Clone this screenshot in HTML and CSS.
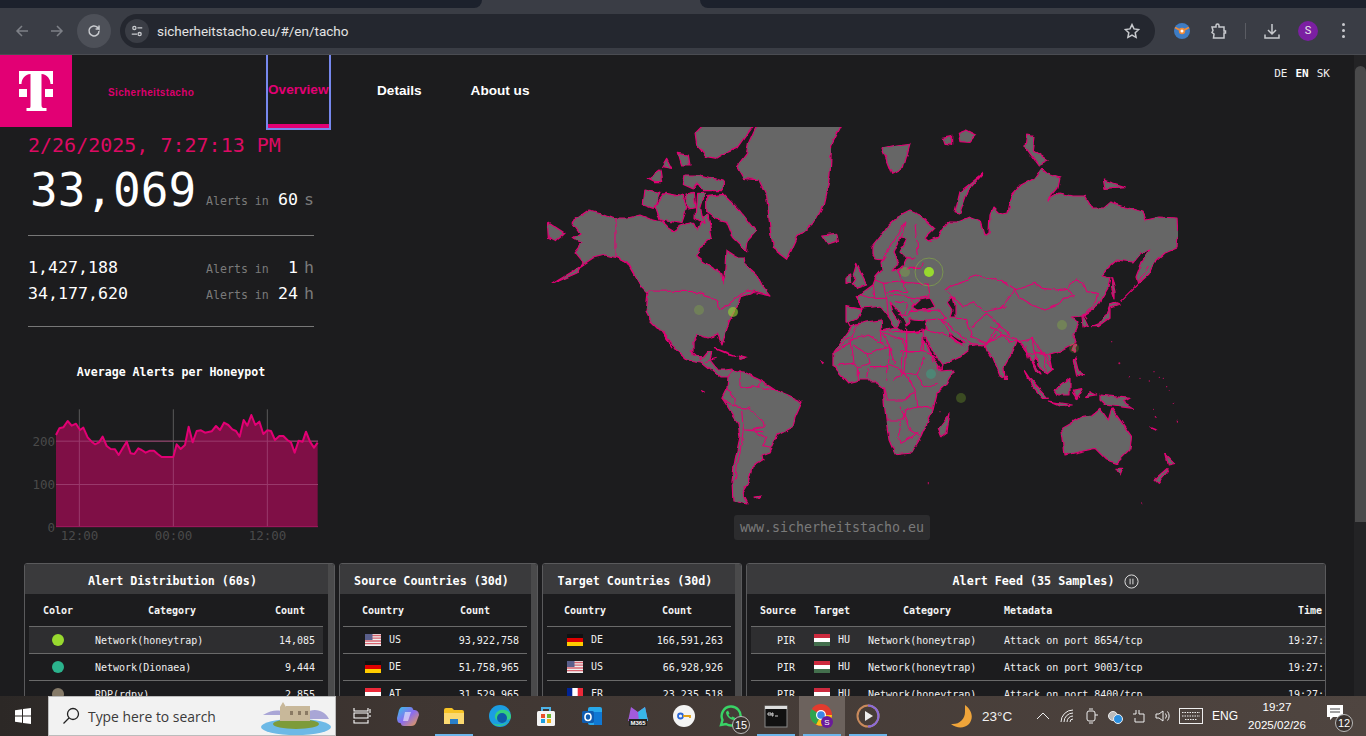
FILE: index.html
```html
<!DOCTYPE html>
<html lang="en">
<head>
<meta charset="utf-8">
<title>Sicherheitstacho</title>
<link rel="stylesheet" href="styles.css">
</head>
<body>
<svg class="defs" width="0" height="0" aria-hidden="true">
  <symbol id="f-us" viewBox="0 0 16 12"><rect width="16" height="12" fill="#eee"/><path d="M0 1.5h16M0 4.2h16M0 7h16M0 9.7h16" stroke="#d8636f" stroke-width="1.3"/><rect width="7.5" height="6" fill="#5a5f8c"/></symbol>
  <symbol id="f-de" viewBox="0 0 16 12"><rect width="16" height="4" fill="#111"/><rect y="4" width="16" height="4" fill="#d00"/><rect y="8" width="16" height="4" fill="#fc0"/></symbol>
  <symbol id="f-at" viewBox="0 0 16 12"><rect width="16" height="12" fill="#ed2939"/><rect y="4" width="16" height="4" fill="#fff"/></symbol>
  <symbol id="f-fr" viewBox="0 0 16 12"><rect width="16" height="12" fill="#fff"/><rect width="5.3" height="12" fill="#002395"/><rect x="10.7" width="5.3" height="12" fill="#ed2939"/></symbol>
  <symbol id="f-hu" viewBox="0 0 16 12"><rect width="16" height="4" fill="#cd2a3e"/><rect y="4" width="16" height="4" fill="#fff"/><rect y="8" width="16" height="4" fill="#436f4d"/></symbol>
</svg>

<div class="tabstrip"><div class="strip-dark"></div><div class="strip-gap"></div><div class="strip-dark grow"></div></div>

<div class="toolbar">
  <svg class="tb-ico" viewBox="0 0 16 16"><path d="M14 8H3M8 3 3 8l5 5" class="dim"/></svg>
  <svg class="tb-ico" viewBox="0 0 16 16"><path d="M2 8h11M8 3l5 5-5 5" class="dim"/></svg>
  <div class="reload"><svg viewBox="0 0 16 16"><path d="M13 8a5 5 0 1 1-1.5-3.6L13 6V2.5M13 6H9.6" class="lit"/></svg></div>
  <div class="omnibox">
    <div class="tune"><svg viewBox="0 0 16 16"><circle cx="5" cy="4.5" r="1.8" class="lit"/><path d="M8.5 4.5H14M2 11.5h6" class="lit"/><circle cx="11" cy="11.5" r="1.8" class="lit"/></svg></div>
    <span class="url">sicherheitstacho.eu/#/en/tacho</span>
    <svg class="star" viewBox="0 0 16 16"><path d="M8 1.6l2 4.3 4.7.6-3.5 3.2.9 4.7L8 12.1l-4.1 2.3.9-4.7L1.300 6.500 6 5.900z" class="lit"/></svg>
  </div>
  <div class="tb-right">
    <svg class="ext-ico" viewBox="0 0 16 16"><circle cx="8" cy="8" r="8" fill="#3d7cc4"/><path d="M1 4.500 6 7h4l5-2.500" stroke="#f08a38" stroke-width="1.800" fill="none"/><circle cx="8" cy="8" r="3.200" fill="#f08a38"/><circle cx="8" cy="8" r="1.500" fill="#fff"/></svg>
    <svg class="tb-ico2" viewBox="0 0 18 18"><path d="M2 5h4V3.500a1.500 1.500 0 0 1 3 0V5h5v4h1.500v2H14v5H3.500l.5-4-2-1.500 1-2z" class="lit"/></svg>
    <div class="tb-sep"></div>
    <svg class="tb-ico2" viewBox="0 0 18 18"><path d="M9 2v9.500M5 8l4 4 4-4M2 12.500V16h14v-3.500" class="lit"/></svg>
    <div class="avatar">S</div>
    <div class="kebab"><i></i><i></i><i></i></div>
  </div>
</div>

<div class="viewport">
<div class="content">
  <header class="site-head">
    <div class="logo"><svg viewBox="0 0 34 40"><path d="M0 0h34v13h-2.500c0-5-3.500-9.800-9-10V34c0 2.500 1 3 3 3h2v3H7.500v-3h2c2 0 2-.5 2-3V3c-5.500.2-9 5-9 10H0z" fill="#fff"/><rect y="18" width="8" height="8" fill="#fff"/><rect x="26" y="18" width="8" height="8" fill="#fff"/></svg></div>
    <div class="brand">Sicherheitstacho</div>
    <nav class="nav">
      <a class="nav-item active">Overview</a>
      <a class="nav-item">Details</a>
      <a class="nav-item">About us</a>
    </nav>
    <div class="langs"><span>DE</span><b>EN</b><span>SK</span></div>
  </header>

  <section class="dash">
    <div class="stats">
      <div class="date">2/26/2025, 7:27:13 PM</div>
      <div class="stat big"><span class="num">33,069</span><span class="lbl">Alerts in</span><span class="val">60</span><span class="unit">s</span></div>
      <hr class="rule first">
      <div class="stat-group">
        <div class="stat"><span class="num">1,427,188</span><span class="lbl">Alerts in</span><span class="val">1</span><span class="unit">h</span></div>
        <div class="stat"><span class="num">34,177,620</span><span class="lbl">Alerts in</span><span class="val">24</span><span class="unit">h</span></div>
      </div>
      <hr class="rule">
      <div class="chart-title">Average Alerts per Honeypot</div>
      <svg class="chart" viewBox="0 400 340 150">
        <g transform="translate(0 350) scale(.33333)">
          <path class="gl" d="M168 273.500H954M168 403.500H954M238 178V530M520 178V530M802 178V530"/>
          <path class="area" d="M168 530V255L178 235 190 232 203 213 215 227 228 221 240 240 250 233 263 262 275 275 285 283 297 277 308 260 320 288 332 297 345 298 356 315 368 295 380 275 392 310 403 312 415 295 425 300 437 308 450 302 462 302 473 312 485 321 520 321 530 283 542 297 555 285 566 230 578 277 590 243 603 241 615 248 635 244 648 228 660 240 672 218 685 225 697 238 708 243 719 260 731 210 742 227 754 195 766 225 778 215 790 252 802 241 813 243 825 270 838 258 850 258 862 270 873 277 884 308 896 272 908 275 918 245 930 275 942 293 953 278V530z"/>
          <path class="gl2" d="M168 273.500H954M168 403.500H954M238 240V530M520 321V530M802 241V530"/>
          <path class="line" d="M168 255L178 235 190 232 203 213 215 227 228 221 240 240 250 233 263 262 275 275 285 283 297 277 308 260 320 288 332 297 345 298 356 315 368 295 380 275 392 310 403 312 415 295 425 300 437 308 450 302 462 302 473 312 485 321 520 321 530 283 542 297 555 285 566 230 578 277 590 243 603 241 615 248 635 244 648 228 660 240 672 218 685 225 697 238 708 243 719 260 731 210 742 227 754 195 766 225 778 215 790 252 802 241 813 243 825 270 838 258 850 258 862 270 873 277 884 308 896 272 908 275 918 245 930 275 942 293 953 278"/>
          <path class="base" d="M168 530H954"/>
        </g>
        <text class="ax" x="55" y="445.500" text-anchor="end">200</text>
        <text class="ax" x="55" y="488.500" text-anchor="end">100</text>
        <text class="ax" x="55" y="531.500" text-anchor="end">0</text>
        <text class="ax" x="79.500" y="540" text-anchor="middle">12:00</text>
        <text class="ax" x="173.500" y="540" text-anchor="middle">00:00</text>
        <text class="ax" x="267.500" y="540" text-anchor="middle">12:00</text>
      </svg>
    </div>

    <div class="map">
      <svg class="map-svg" viewBox="340 127 1014 436">
        <defs>
          <filter id="rough" x="0" y="0" width="1" height="1" color-interpolation-filters="sRGB">
            <feTurbulence type="fractalNoise" baseFrequency=".1" numOctaves="2" seed="4"/>
            <feDisplacementMap in="SourceGraphic" scale="5" xChannelSelector="R" yChannelSelector="G"/>
          </filter>
        </defs>
        <g filter="url(#rough)">
        <!-- North America -->
        <path class="land" d="M572 222 589 210 602 213 615 218 628 218 640 215 650 219 662 222 668 228 673 231 680 226 693 222 697 230 703 217 708 215 712 237 700 247 697 257 713 268 722 273 723 285 725 267 726 250 737 257 743 257 744 263 757 275 762 285 770 295 755 290 750 293 741 296 738 304 735 310 729 322 725 335 722 345 718 335 708 338 698 335 693 342 693 355 703 358 708 352 712 352 710 360 718 370 725 370 732 369 733 374 728 377 720 377 712 370 702 362 687 360 678 352 663 332 672 348 660 330 650 320 646 312 648 293 640 285 628 263 618 258 605 255 593 258 575 270 552 284 577 273 583 262 575 252 582 243 573 238 580 233z"/>
        <g transform="translate(540 125) scale(.33333)">
          <path class="bd" d="M228 278V395L262 415 300 480M325 498 480 500 535 530 538 553 575 530 620 495 690 510"/>
          <path class="land" d="M650 0 905 0 875 60 870 150 850 240 820 295 770 335 740 400 700 370 690 310 680 215 655 165 610 160 590 125 620 85 625 55z"/>
          <path class="land" d="M845 330 890 325 895 350 865 360z"/>
          <path class="land" d="M490 0 640 0 590 70 555 85 530 100 500 95 470 60 465 25z"/>
          <path class="land" d="M415 85 445 90 450 120 425 120z"/>
          <path class="land" d="M380 100 395 130 365 125z"/>
          <path class="land" d="M325 160 360 135 365 170 345 170z"/>
          <path class="land" d="M315 195 360 205 340 250 310 240z"/>
          <path class="land" d="M345 240 375 205 430 215 440 250 425 295 360 285z"/>
          <path class="land" d="M435 150 480 150 550 168 550 197 490 197 475 172 460 192 430 178z"/>
          <path class="land" d="M435 210 460 205 465 248 445 252z"/>
          <path class="land" d="M470 205 495 205 482 250 492 295 465 278z"/>
          <path class="land" d="M500 215 550 208 600 258 648 320 625 345 620 380 580 340 560 290 530 282 500 262z"/>
          <path class="land" d="M22 290 75 325 45 350 25 340z"/>
        </g>
        <!-- South America -->
        <path class="land" d="M733 370 743 372 760 380 775 390 787 395 802 402 795 418 793 427 778 435 770 452 762 455 763 460 752 467 748 483 742 493 748 505 733 502 732 480 735 460 740 437 738 423 722 398 727 388 728 377z"/>
        <!-- Eurasia and Africa -->
        <path class="land" d="M872 254 872 247 880 237 888 225 898 216 910 210 920 214 935 228 925 238 928 241 938 237 941 231 948 222 958 222 970 217 981 221 985 235 989 232 990 215 993 208 998 213 1003 214 1008 213 1012 195 1020 186 1035 178 1042 168 1050 175 1060 178 1058 188 1048 200 1060 193 1073 196 1085 196 1092 208 1103 208 1110 202 1125 207 1143 212 1146 220 1160 217 1177 218 1178 235 1177 248 1165 253 1155 262 1148 275 1138 284 1136 278 1142 262 1150 250 1140 253 1133 262 1117 260 1108 268 1102 275 1110 277 1108 288 1098 305 1088 312 1083 315 1088 325 1083 327 1082 316 1072 317 1078 323 1073 335 1075 343 1057 353 1050 355 1053 370 1047 375 1040 368 1037 358 1033 362 1040 375 1036 372 1030 358 1028 355 1022 345 1017 340 1012 352 1003 368 1004 378 1000 375 993 358 987 350 985 344 968 346 968 350 958 358 941 366 938 368 941 371 953 370 953 372 945 385 937 393 933 410 921 437 912 452 895 454 889 440 886 420 883 390 875 380 860 380 848 383 838 372 833 366 833 352 842 340 853 325 860 320 851 324 846 322 846 307 862 309 856 296 862 293 873 285 876 277 882 270 881 262 886 258 882 260 876 259z"/>
        <path class="sea" d="M848 323 858 318 863 308 873 307 880 306 888 316 896 328 900 322 893 312 890 302 900 312 905 322 906 325 910 322 909 318 912 320 926 321 927 330 922 332 905 333 895 327 882 330 881 320 865 322 850 327z"/>
        <path class="sea" d="M913 307 920 300 930 298 935 307 927 309 918 310z"/>
        <path class="sea" d="M947 302 953 297 955 305 955 318 950 318 952 310z"/>
        <path class="sea" d="M900 237 893 253 898 263 892 272 903 267 907 258 915 258 905 257 900 252 907 238z"/>
        <path class="sea" d="M923 338 933 358 941 370 943 366 933 352 926 338z"/>
        <path class="sea" d="M948 335 957 342 963 345 965 343 957 338 950 333z"/>
        <!-- Borders: Europe, Middle East, Central Asia -->
        <g transform="translate(840 255) scale(.33333)">
          <path class="bd" d="M20 155 70 165M45 120 70 165M100 90 105 130 60 115M105 75 130 85 140 130 105 130M130 85 190 80 200 110 140 110M195 85 265 90 270 125 235 130 200 125M140 130 145 185M145 120 210 125 225 150 205 180 175 175M165 140 200 145 195 175M205 180 215 165M210 170 300 165 320 190 260 195M300 190 335 245 370 275M260 195 258 225 290 230 340 250M320 110 350 135 370 160 400 140 435 170 500 155M345 190 380 190 395 245 440 265M395 215 440 175 480 210 440 265 470 240M480 210 510 240M350 135 345 125M30 255 85 240 125 265 120 225M30 255 40 330M125 265 150 280 165 330M120 225 200 232 200 290M200 290 250 290 250 225M250 290 290 310"/>
          <path class="bd" d="M195 85 170 50 190 30M315 105 335 90 390 70 420 60 470 75 505 85M200 40 240 40 250 20"/>
          <path class="land" d="M50 25 65 60 80 90 50 100 40 85 50 70 40 60z"/>
          <path class="land" d="M15 70 32 60 35 80 15 85z"/>
        </g>
        <!-- Borders: Asia -->
        <g transform="translate(1000 255) scale(.33333)">
          <path class="bd" d="M0 75 45 105 75 95 105 85 130 100 170 105 200 100 225 75 250 80 260 110 295 115 290 140 270 160 245 180M45 105 60 130 95 150 135 165 175 150 190 130 220 125 200 100M0 160 10 150 45 105M0 235 30 260 55 260 100 250 105 290 150 300M75 270 85 310M100 250 130 300M250 175 262 190M445 30 410 90 360 140"/>
          <path class="land" d="M335 65 345 110 345 132 335 100z"/>
          <path class="land" d="M345 145 358 150 330 160 330 190 295 215 275 215 300 205 320 180 330 150z"/>
          <path class="land" d="M222 270 228 272 222 292 216 285z"/>
        </g>
        <g transform="translate(860 125) scale(.33333)">
          <path class="bd" d="M135 290 70 400M135 290 125 335M165 300 175 390"/>
          <path class="land" d="M65 70 110 60 150 55 130 130 95 148z"/>
          <path class="land" d="M370 145 300 200 285 260 300 265 325 195z"/>
          <path class="land" d="M250 40 275 35 275 58 255 55z"/>
          <path class="land" d="M295 25 320 15 350 30 330 52 300 50z"/>
          <path class="land" d="M500 30 525 35 520 75 565 105 535 120 495 65z"/>
          <path class="land" d="M730 165 795 185 735 190z"/>
        </g>
        <!-- Americas and Africa borders and islands -->
        <g transform="translate(620 320) scale(.33333)">
          <path class="bd" d="M320 205 345 235 345 260 385 265 425 300 430 320 400 330 370 330 365 270M360 205 360 150M360 205 415 200 420 180M415 200 465 210M370 330 365 370 355 420 345 480M400 330 440 355 425 380 455 385M370 330 430 335M345 260 305 235M210 90 245 120M255 125 290 115"/>
          <path class="bd" d="M720 5 700 40 640 100 690 70 700 40M700 75 745 105 750 130 715 140 700 130 650 135M745 105 785 85 810 80 785 40 780 20M785 40 850 60 860 100M860 100 860 20M860 35 900 35M855 95 900 95M810 80 805 135 855 155 860 100M750 140 800 140 800 185M790 205 800 240 855 240 885 215 855 155 820 185M800 300 850 300 855 270 895 260M845 305 835 350 840 370 895 340M715 140 715 180M745 145 740 175"/>
          <path class="land" d="M285 85 350 108 320 100z"/>
          <path class="land" d="M355 105 382 113 360 118z"/>
          <path class="land" d="M405 528 425 525 415 535z"/>
          <path class="land" d="M248 212 256 216 250 218z"/>
          <path class="land" d="M600 122 610 128 604 132z"/>
        </g>
        <!-- Asia Pacific islands and East Africa -->
        <g transform="translate(900 320) scale(.33333)">
          <path class="bd" d="M5 155 50 165 75 200 110 190M45 215 50 260 100 265M0 260 30 330 60 350M0 95 60 95 70 60M10 95 5 155M50 165 75 110M80 60 100 130M0 40 70 30M130 0 210 70 250 75M250 75 310 45 350 60 385 105M310 45 270 20M385 105 430 95 460 150M430 95 440 165M405 90 420 145"/>
          <path class="land" d="M150 278 140 340 125 350 115 325z"/>
          <path class="land" d="M315 165 320 178 310 178z"/>
          <path class="land" d="M375 150 395 180 445 235 430 235 395 195z"/>
          <path class="land" d="M445 243 520 255 480 258z"/>
          <path class="land" d="M465 210 510 175 510 225 475 225z"/>
          <path class="land" d="M520 210 550 205 530 240z"/>
          <path class="land" d="M525 110 535 150 550 170 530 165 520 120z"/>
          <path class="land" d="M600 225 690 235 670 245 700 265 615 255 600 240z"/>
          <path class="land" d="M570 215 590 225 560 230z"/>
          <path class="land" d="M545 290 575 285 600 265 625 300 635 265 695 350 690 390 650 430 620 420 585 385 495 405 485 325z"/>
          <path class="land" d="M648 445 668 445 660 465z"/>
          <path class="land" d="M797 402 825 430 805 435z"/>
          <path class="land" d="M775 490 765 480 803 447 805 455z"/>
          <path class="land" d="M750 320 770 330 765 326z"/>
          <g class="specks"><circle cx="765" cy="152" r="2"/><circle cx="778" cy="172" r="2"/><circle cx="790" cy="175" r="2"/><circle cx="800" cy="200" r="2"/><circle cx="808" cy="213" r="2"/><circle cx="748" cy="183" r="2"/><circle cx="720" cy="175" r="2"/><circle cx="688" cy="170" r="2"/><circle cx="655" cy="130" r="3"/><circle cx="635" cy="65" r="2"/><circle cx="770" cy="290" r="3"/><circle cx="830" cy="302" r="3"/><circle cx="820" cy="250" r="2"/><circle cx="760" cy="268" r="2"/><circle cx="88" cy="488" r="2"/><circle cx="725" cy="552" r="2"/><circle cx="120" cy="275" r="2"/></g>
        </g>
        </g>
        <!-- Pins -->
        <g class="pins">
          <circle cx="929" cy="272" r="14" class="ring"/>
          <circle cx="929" cy="272" r="5" fill="#98d92f"/>
          <circle cx="905" cy="272" r="5" fill="#98d92f" opacity=".25"/>
          <circle cx="699" cy="310" r="5" fill="#98d92f" opacity=".22"/>
          <circle cx="733" cy="312" r="5" fill="#98d92f" opacity=".6"/>
          <circle cx="1062" cy="325" r="5" fill="#98d92f" opacity=".25"/>
          <circle cx="931" cy="374" r="5" fill="#2bb38d" opacity=".4"/>
          <circle cx="961" cy="398" r="5" fill="#98d92f" opacity=".25"/>
          <circle cx="1074" cy="348" r="5" fill="#98d92f" opacity=".2"/>
        </g>
      </svg>
      <div class="map-url">www.sicherheitstacho.eu</div>
    </div>
  </section>

  <section class="panels">
    <article class="panel p-dist">
      <div class="panel-main">
        <h2 class="panel-title">Alert Distribution (60s)</h2>
        <table class="tbl">
          <thead><tr><th class="c-color">Color</th><th class="c-cat">Category</th><th class="c-count">Count</th></tr></thead>
          <tbody>
            <tr class="hl"><td class="ctr"><i class="dot d1"></i></td><td class="pl">Network(honeytrap)</td><td class="rt">14,085</td></tr>
            <tr><td class="ctr"><i class="dot d2"></i></td><td class="pl">Network(Dionaea)</td><td class="rt">9,444</td></tr>
            <tr><td class="ctr"><i class="dot d3"></i></td><td class="pl">RDP(rdpy)</td><td class="rt">2,855</td></tr>
          </tbody>
        </table>
      </div>
      <div class="panel-scroll"></div>
    </article>

    <article class="panel p-src">
      <div class="panel-main">
        <h2 class="panel-title">Source Countries (30d)</h2>
        <table class="tbl">
          <thead><tr><th class="c-ctry">Country</th><th class="c-num">Count</th></tr></thead>
          <tbody>
            <tr><td class="flagcell"><svg class="flag"><use href="#f-us"/></svg>US</td><td class="rt">93,922,758</td></tr>
            <tr><td class="flagcell"><svg class="flag"><use href="#f-de"/></svg>DE</td><td class="rt">51,758,965</td></tr>
            <tr><td class="flagcell"><svg class="flag"><use href="#f-at"/></svg>AT</td><td class="rt">31,529,965</td></tr>
          </tbody>
        </table>
      </div>
      <div class="panel-scroll"></div>
    </article>

    <article class="panel p-tgt">
      <div class="panel-main">
        <h2 class="panel-title">Target Countries (30d)</h2>
        <table class="tbl">
          <thead><tr><th class="c-ctry">Country</th><th class="c-num">Count</th></tr></thead>
          <tbody>
            <tr><td class="flagcell"><svg class="flag"><use href="#f-de"/></svg>DE</td><td class="rt">166,591,263</td></tr>
            <tr><td class="flagcell"><svg class="flag"><use href="#f-us"/></svg>US</td><td class="rt">66,928,926</td></tr>
            <tr><td class="flagcell"><svg class="flag"><use href="#f-fr"/></svg>FR</td><td class="rt">23,235,518</td></tr>
          </tbody>
        </table>
      </div>
      <div class="panel-scroll"></div>
    </article>

    <article class="panel p-feed">
      <div class="panel-main">
        <h2 class="panel-title">Alert Feed (35 Samples)<svg class="pause" viewBox="0 0 16 16"><circle cx="8" cy="8" r="7"/><path d="M6.500 5v6M9.500 5v6"/></svg></h2>
        <table class="tbl">
          <thead><tr><th class="c-s">Source</th><th class="c-t">Target</th><th class="c-k">Category</th><th class="c-m">Metadata</th><th class="c-time">Time</th></tr></thead>
          <tbody>
            <tr class="hl"><td class="rt src">PIR</td><td class="flagcell"><svg class="flag"><use href="#f-hu"/></svg>HU</td><td class="pl">Network(honeytrap)</td><td class="pl">Attack on port 8654/tcp</td><td class="pl">19:27:13</td></tr>
            <tr><td class="rt src">PIR</td><td class="flagcell"><svg class="flag"><use href="#f-hu"/></svg>HU</td><td class="pl">Network(honeytrap)</td><td class="pl">Attack on port 9003/tcp</td><td class="pl">19:27:13</td></tr>
            <tr><td class="rt src">PIR</td><td class="flagcell"><svg class="flag"><use href="#f-hu"/></svg>HU</td><td class="pl">Network(honeytrap)</td><td class="pl">Attack on port 8400/tcp</td><td class="pl">19:27:13</td></tr>
          </tbody>
        </table>
      </div>
    </article>
  </section>
</div>
<div class="scrollbar"><div class="scroll-thumb"></div></div>
</div>

<footer class="taskbar">
  <svg class="win" viewBox="0 0 16 16"><path d="M0 2.200 7 1.200V7.500H0zM8 1 16 0V7.500H8zM0 8.500H7V14.800L0 13.800zM8 8.500H16V16L8 15z" fill="#fff"/></svg>
  <div class="search">
    <svg class="glass" viewBox="0 0 18 18"><circle cx="11" cy="7" r="5.500"/><path d="M7 11 1.500 16.500"/></svg>
    <span>Type here to search</span>
    <svg class="castle" viewBox="0 0 72 36"><ellipse cx="36" cy="28" rx="35" ry="8" fill="#6db9e6"/><path d="M3 16C15 8 25 12 30 16H3zM45 14c10-6 20-2 24 6H45z" fill="#a9a6d6"/><ellipse cx="36" cy="25" rx="23" ry="5" fill="#7d9b3a"/><path d="M20 8 23 3 26 8V22H20zM26 7H50V22H26z" fill="#c8b89a"/><path d="M30 12h3v4h-3zM38 12h3v4h-3zM45 12h3v4h-3z" fill="#8a7a63"/></svg>
  </div>
  <div class="apps">
    <div class="app"><svg viewBox="0 0 20 20"><path d="M3 2v3h14V2M3 14v3h14v-3M3 7h14v5H3zM19 3v4M19 9v2" fill="none" stroke="#fff" stroke-width="1.100"/></svg></div>
    <div class="app"><svg viewBox="0 0 24 24"><defs><linearGradient id="cp" x1="0" y1="0" x2="1" y2="1"><stop offset="0" stop-color="#35c4e8"/><stop offset=".5" stop-color="#8a6cf0"/><stop offset="1" stop-color="#f0a040"/></linearGradient></defs><path d="M6 3h8c4 0 2 3 4 3s5 1 5 5l-3 8c-1 2-2 3-5 3H8c-4 0-2-3-4-3s-3-2-3-5l2-8c1-2 2-3 3-3z" fill="url(#cp)"/><path d="M9 8h6l-3 9H7z" fill="#fff" opacity=".55"/></svg></div>
    <div class="app under"><svg viewBox="0 0 24 24"><path d="M2 6a2 2 0 0 1 2-2h6l2 2h8a2 2 0 0 1 2 2v12H2z" fill="#f7c325"/><path d="M2 9h20v11H2z" fill="#fbd970"/><path d="M8 20v-5h8v5z" fill="#2a7fc8"/></svg></div>
    <div class="app"><svg viewBox="0 0 24 24"><circle cx="12" cy="12" r="11" fill="#1b9de2"/><path d="M23 13c0-5-5-8-10-7-6 1-8 8-4 10 3 2 8 1 13-1-3 6-12 10-18 4 8 4 18 0 19-6z" fill="#35d07f"/><circle cx="14" cy="14" r="5" fill="#0f5ba8"/></svg></div>
    <div class="app"><svg viewBox="0 0 24 24"><path d="M8 7V4h8v3" fill="none" stroke="#4db3e8" stroke-width="2"/><rect x="3" y="7" width="18" height="15" rx="1.500" fill="#f4f4f4"/><rect x="7" y="10" width="4" height="4" fill="#e8502a"/><rect x="13" y="10" width="4" height="4" fill="#6ab82e"/><rect x="7" y="15" width="4" height="4" fill="#1c9fe0"/><rect x="13" y="15" width="4" height="4" fill="#f4b21a"/></svg></div>
    <div class="app"><svg viewBox="0 0 24 24"><rect x="8" y="3" width="14" height="18" rx="2" fill="#28a8ea"/><rect x="14" y="8" width="8" height="13" fill="#0f78d4"/><rect x="2" y="7" width="12" height="12" rx="1.500" fill="#0f5cb0"/><ellipse cx="8" cy="13" rx="3" ry="3.500" fill="none" stroke="#fff" stroke-width="1.600"/></svg></div>
    <div class="app"><svg viewBox="0 0 24 24"><path d="M5 3 12 8l7-5 3 14H2z" fill="#a35bdc"/><path d="M12 8l7-5 3 14H13z" fill="#38b6e8"/><rect x="3" y="15" width="18" height="7" fill="#222"/><text x="12" y="21" class="m365" text-anchor="middle">M365</text></svg></div>
    <div class="app"><svg viewBox="0 0 24 24"><circle cx="12" cy="12" r="11" fill="#f4f4f4"/><circle cx="8.500" cy="12" r="2.500" fill="none" stroke="#2a67d8" stroke-width="1.800"/><path d="M11 12h7v2" fill="none" stroke="#e0a018" stroke-width="1.800"/></svg></div>
    <div class="app badge-host"><svg viewBox="0 0 24 24"><path d="M3 21l1.500-5A9.500 9.500 0 1 1 8 20z" fill="none" stroke="#39d366" stroke-width="2.400"/><path d="M8 8c0 4 4 8 8 8l1.500-2-3-1.500-1 1c-1 0-3-2-3-3l1-1L10 6.500z" fill="#39d366"/></svg><span class="badge">15</span></div>
    <div class="app under"><svg viewBox="0 0 24 24"><rect x="1" y="2" width="22" height="21" fill="#111" stroke="#888"/><path d="M1 2h22v3H1z" fill="#ddd"/><path d="M4 9h3v2H4zM8 9h1v3H8zM11 12h3" stroke="#ccc" fill="none"/></svg></div>
    <div class="app under current"><svg viewBox="0 0 24 24"><circle cx="11" cy="11" r="11" fill="#e33b2e"/><path d="M11 11 22 11A11 11 0 0 1 6 20.500z" fill="#f9c517"/><path d="M11 11 6 20.500A11 11 0 0 1 1.500 5z" fill="#2ea44f"/><circle cx="11" cy="11" r="5" fill="#fff"/><circle cx="11" cy="11" r="3.800" fill="#3d85e6"/><circle cx="17" cy="18" r="6" fill="#6a1b9a"/><text x="17" y="21" class="chr-s" text-anchor="middle">S</text></svg></div>
    <div class="app under"><svg viewBox="0 0 24 24"><circle cx="12" cy="12" r="10.500" fill="none" stroke="#c98a5c" stroke-width="2"/><path d="M12 1.500a10.500 10.500 0 0 1 0 21" fill="none" stroke="#8a6cd8" stroke-width="2"/><path d="M9 7l8 5-8 5z" fill="#eee"/></svg></div>
  </div>
  <div class="tray">
    <svg class="moon" viewBox="0 0 24 24"><path d="M15 1C22 6 24 14 19 20 14 25 6 24 1 20 9 21 15 15 15 8z" fill="#f0a53a"/></svg>
    <span class="temp">23°C</span>
    <svg class="tray-i caret" viewBox="0 0 16 16"><path d="M2 11 8 5l6 6"/></svg>
    <svg class="tray-i" viewBox="0 0 16 16"><path d="M2 14A12 12 0 0 1 14 2M5 14A9 9 0 0 1 14 5M8 14a6 6 0 0 1 6-6M11 14a3 3 0 0 1 3-3"/></svg>
    <svg class="tray-i" viewBox="0 0 16 16"><rect x="4" y="3" width="8" height="10" rx="2"/><path d="M6 1h4M6 15h4M12 7h3"/></svg>
    <svg class="tray-i fill" viewBox="0 0 16 16"><circle cx="6" cy="8" r="4.500" fill="#bbb"/><circle cx="11" cy="11" r="4.500" fill="#2a8fe0"/></svg>
    <svg class="tray-i" viewBox="0 0 16 16"><path d="M2 6h3V2M8 2v4h5v8H4v-4"/></svg>
    <svg class="tray-i" viewBox="0 0 16 16"><path d="M1 6v4h3l4 3V3L4 6zM10.500 5.500a4 4 0 0 1 0 5M12.500 3.500a7 7 0 0 1 0 9"/></svg>
    <svg class="tray-kb" viewBox="0 0 24 16"><rect x=".5" y=".5" width="23" height="15"/><path d="M3 4.500h18M3 8h18M6 11.500h12" stroke-dasharray="1.500 1"/></svg>
    <span class="eng">ENG</span>
    <div class="clock"><span>19:27</span><span>2025/02/26</span></div>
    <div class="notif"><svg viewBox="0 0 18 18"><path d="M1 1h16v12H7l-3 3v-3H1z" fill="#fff"/><path d="M4 5h10M4 8h10" stroke="#444"/></svg><span class="nbadge">12</span></div>
  </div>
</footer>
</body>
</html>
```

FILE: styles.css
```css
* { box-sizing: border-box; }
html, body { margin: 0; height: 736px; overflow: hidden; }
body {
  display: flex;
  flex-direction: column;
  width: 1366px;
  background: #1c1c1e;
  font-family: "DejaVu Sans Mono", monospace;
  color: #eee;
}
.defs { position: absolute; }

/* Browser chrome */
.tabstrip { display: flex; height: 8px; background: #3a3d45; flex: none; }
.strip-dark { width: 482px; background: #1c212c; border-radius: 0 0 8px 0; }
.strip-gap { width: 218px; }
.strip-dark.grow { flex: 1; width: auto; border-radius: 0 0 0 8px; }
.toolbar {
  flex: none;
  display: flex;
  align-items: center;
  height: 47px;
  padding: 0 0 1px 14px;
  background: #3a3d45;
  border-bottom: 1px solid #4a4c52;
}
.tb-ico { width: 16px; height: 16px; margin-right: 19px; }
.tb-ico path, .reload path, .tune path, .tune circle, .star path, .tb-ico2 path {
  fill: none;
  stroke-width: 1.5;
}
.dim { stroke: #7d8087; }
.lit { stroke: #c8cace; }
.reload {
  width: 34px;
  height: 34px;
  margin-left: -7px;
  border-radius: 50%;
  background: #4d5058;
  display: flex;
  align-items: center;
  justify-content: center;
}
.reload svg { width: 16px; height: 16px; }
.omnibox {
  display: flex;
  align-items: center;
  width: 1035px;
  height: 34px;
  margin-left: 9px;
  padding: 0 15px 0 5px;
  border-radius: 17px;
  background: #24272f;
}
.tune {
  width: 24px;
  height: 24px;
  border-radius: 50%;
  background: #3a3d45;
  display: flex;
  align-items: center;
  justify-content: center;
}
.tune svg { width: 14px; height: 14px; }
.url {
  flex: 1;
  margin-left: 8px;
  font: 13.5px Roboto, sans-serif;
  color: #e3e3e3;
}
.star { width: 16px; height: 16px; }
.tb-right { display: flex; align-items: center; margin-left: 19px; }
.ext-ico { width: 16px; height: 16px; margin-right: 20px; }
.tb-ico2 { width: 18px; height: 18px; }
.tb-sep { width: 1px; height: 16px; margin: 0 17px; background: #5a5c63; }
.avatar {
  width: 20px;
  height: 20px;
  margin-left: 17px;
  border-radius: 50%;
  background: #7b1fa2;
  font: 11px/20px Roboto, sans-serif;
  color: #e8e8e8;
  text-align: center;
}
.kebab { display: flex; flex-direction: column; gap: 3px; margin-left: 24px; }
.kebab i { width: 3px; height: 3px; border-radius: 50%; background: #c8cace; }

/* Page viewport */
.viewport { flex: 1; display: flex; min-height: 0; overflow: hidden; }
.content { width: 1354px; min-height: 0; overflow: hidden; }
.scrollbar { width: 12px; padding-top: 11px; background: #232325; }
.scroll-thumb { height: 456px; margin-left: 1px; border-radius: 6px 6px 0 0; background: #4a4a4b; }

.site-head { position: relative; display: flex; height: 72px; }
.logo {
  width: 72px;
  height: 72px;
  background: #e20074;
  display: flex;
  align-items: center;
  justify-content: center;
}
.logo svg { width: 34px; height: 40px; }
.brand {
  width: 194px;
  padding: 32px 0 0 36px;
  font: bold 10px/12px "Liberation Sans", sans-serif;
  letter-spacing: .35px;
  color: #d9006c;
}
.nav { display: flex; font: bold 13.600px "Liberation Sans", sans-serif; }
.nav-item {
  display: flex;
  align-items: center;
  height: 72px;
  padding: 0 2px 1px;
  margin-right: 45px;
  color: #fff;
  white-space: nowrap;
}
.nav-item.active {
  position: relative;
  height: 75px;
  margin-right: 44px;
  padding: 0 0 5px 0;
  width: 65px;
  color: #e20074;
  border: 2px solid #7688ee;
  border-top: none;
}
.nav-item.active::after {
  content: "";
  position: absolute;
  left: 0;
  right: 0;
  bottom: 0;
  height: 4px;
  background: #e20074;
}
.langs {
  position: absolute;
  top: 12px;
  right: 24px;
  display: flex;
  gap: 8px;
  font-size: 11px;
  line-height: 14px;
  color: #eee;
}
.langs b { color: #fff; }

/* Stats column */
.dash { display: flex; height: 436px; }
.stats { flex: none; width: 340px; padding-left: 28px; }
.date { margin-top: 6px; width: 286px; font-size: 20px; line-height: 24px; color: #dc0a63; white-space: nowrap; }
.stat { display: flex; align-items: baseline; width: 286px; height: 26px; line-height: 26px; }
.stat .num { width: 178px; font-size: 16.600px; color: #fff; }
.stat .lbl { width: 63px; font-size: 11.600px; color: #7a7a7a; white-space: nowrap; }
.stat .val { flex: 1; font-size: 16.600px; color: #fff; text-align: right; }
.stat .unit { width: 16px; font-size: 16.600px; color: #7a7a7a; text-align: right; }
.stat.big { height: 58px; margin-top: 4px; line-height: 58px; }
.stat.big .num { width: 176px; margin-left: 2px; font-size: 46px; }
.stat.big .lbl, .stat.big .val, .stat.big .unit { transform: translateY(-1px); }
.rule { width: 286px; height: 1px; margin: 19px 0 0; border: none; background: #777; }
.rule.first { margin-top: 16px; }
.stat-group { margin-top: 19px; }
.chart-title {
  width: 286px;
  margin-top: 36px;
  font-size: 11.600px;
  font-weight: bold;
  line-height: 18px;
  text-align: center;
  color: #fff;
}
.chart { display: block; width: 340px; height: 150px; margin: 19px 0 0 -28px; }
.gl { fill: none; stroke: #5a5a5a; stroke-width: 3; }
.gl2 { fill: none; stroke: #9a3a6c; stroke-width: 3; }
.area { fill: #7f0f46; }
.line { fill: none; stroke: #e20074; stroke-width: 6; stroke-linejoin: round; }
.base { fill: none; stroke: #a51a60; stroke-width: 3; }
.ax { font: 12.500px "DejaVu Sans Mono", monospace; fill: #4a4a4a; }

/* Map */
.map { position: relative; flex: none; width: 1014px; height: 436px; }
.map-svg { display: block; width: 1014px; height: 436px; }
.map-svg * { vector-effect: non-scaling-stroke; }
.land { fill: #666; stroke: #e20074; stroke-width: 1.200; stroke-linejoin: round; }
.sea { fill: #1c1c1e; stroke: #e20074; stroke-width: 1.200; stroke-linejoin: round; }
.bd { fill: none; stroke: #e20074; stroke-width: 1.100; stroke-linejoin: round; }
.specks { fill: #c00a62; }
.ring { fill: none; stroke: #98d92f; stroke-width: 1; opacity: .4; }
.map-url {
  position: absolute;
  left: 394px;
  top: 388px;
  width: 196px;
  height: 25px;
  border-radius: 3px;
  background: #2c2c2e;
  font-size: 13.300px;
  line-height: 25px;
  text-align: center;
  color: #7a7a7a;
}

/* Panels */
.panels { display: flex; gap: 4px; margin-left: 24px; }
.panel {
  display: flex;
  height: 160px;
  border: 1px solid #5a5a5c;
  border-radius: 3px;
  overflow: hidden;
  background: #1c1c1e;
}
.p-dist { width: 311px; }
.p-src { width: 199px; }
.p-tgt { width: 200px; }
.p-feed { width: 580px; }
.panel-main { flex: 1; min-width: 0; overflow: hidden; }
.panel-scroll { flex: none; width: 6px; background: #4a4a4b; }
.panel-title {
  display: flex;
  align-items: center;
  justify-content: center;
  gap: 10px;
  height: 30px;
  margin: 0;
  padding: 4px 8px 0 0;
  font-size: 11.700px;
  font-weight: bold;
  background: #3a3a3c;
  color: #fff;
}
.p-feed .panel-title { padding: 4px 0 0 20px; }
.pause { width: 15px; height: 15px; fill: none; stroke: #e8e8e8; stroke-width: 1; }
.tbl {
  table-layout: fixed;
  border-collapse: collapse;
  margin: 0 0 0 4px;
  font-size: 10px;
  color: #f0f0f0;
}
.tbl th {
  height: 32px;
  padding: 1px 0 0;
  font-weight: bold;
  border-bottom: 1px solid #6a6a6a;
  color: #f4f4f4;
}
.tbl td {
  height: 27px;
  padding: 1px 0 0;
  border-bottom: 1px solid #6a6a6a;
  white-space: nowrap;
  overflow: hidden;
}
.tbl .hl td { background: #2e2e30; }
.p-dist .tbl { width: 294px; }
.p-src .tbl { width: 184px; margin-left: 3px; }
.p-tgt .tbl { width: 184px; }
.p-feed .tbl { width: 574px; }
.c-color { width: 58px; }
.c-cat { width: 170px; }
.c-count { width: 66px; }
.tbl th.c-ctry { width: 80px; }
.p-src .tbl th.c-num { width: 104px; padding-left: 37px; text-align: left; }
.p-tgt .tbl th.c-ctry { width: 76px; }
.p-tgt .tbl th.c-num { width: 108px; padding-left: 39px; text-align: left; }
.c-s { width: 54px; }
.c-t { width: 54px; }
.c-k { width: 136px; }
.tbl th.c-m { width: 284px; padding-left: 9px; text-align: left; }
.tbl th.c-time { width: 46px; padding-right: 3px; text-align: right; }
.ctr { text-align: center; }
.tbl td.pl { padding-left: 8px; }
.p-feed .tbl td.pl { padding-left: 9px; }
.tbl td.rt { padding-right: 8px; text-align: right; }
.tbl td.src { padding-right: 10px; }
.dot { display: block; width: 12px; height: 12px; margin: 0 auto; border-radius: 50%; }
.d1 { background: #98d92f; }
.d2 { background: #2bb38d; }
.d3 { background: #857a68; }
.flag { display: inline-block; width: 16px; height: 12px; margin-right: 8px; vertical-align: middle; }
.p-src .tbl td.flagcell { padding-left: 22px; }
.p-tgt .tbl td.flagcell { padding-left: 20px; }
.p-feed .tbl td.flagcell { padding-left: 9px; }

/* Taskbar */
.taskbar {
  flex: none;
  display: flex;
  align-items: stretch;
  height: 40px;
  background: linear-gradient(90deg, #2c2826, #3f3632 30%, #4f4540);
  color: #fff;
}
.win { flex: none; width: 16px; height: 16px; margin: 12px 17px 0 15px; }
.search {
  flex: none;
  position: relative;
  display: flex;
  align-items: center;
  width: 288px;
  background: #f2f2f2;
  border: 1px solid #bcbcbc;
  font: 13.900px "Open Sans", sans-serif;
  color: #3a3a3a;
}
.glass { width: 18px; height: 18px; margin: 0 8px 0 13px; fill: none; stroke: #222; stroke-width: 1.300; }
.castle { position: absolute; right: 3px; top: 2px; width: 72px; height: 36px; }
.apps { display: flex; margin-left: 1px; }
.app {
  position: relative;
  width: 46px;
  display: flex;
  align-items: center;
  justify-content: center;
}
.app:first-child { width: 48px; }
.app svg { width: 24px; height: 24px; }
.app:first-child svg { width: 20px; height: 20px; }
.under::after {
  content: "";
  position: absolute;
  left: 4px;
  right: 4px;
  bottom: 0;
  height: 2px;
  background: #6cb5ea;
}
.current { background: #6c625d; }
.m365 { font: bold 6px "Liberation Sans", sans-serif; fill: #fff; }
.chr-s { font: 8px "Liberation Sans", sans-serif; fill: #fff; }
.badge, .nbadge {
  position: absolute;
  width: 18px;
  height: 18px;
  border: 1px solid #bbb;
  border-radius: 50%;
  background: #3a322e;
  font: 11px/16px "Liberation Sans", sans-serif;
  text-align: center;
  color: #fff;
}
.badge { right: 3px; bottom: 2px; }
.tray { flex: 1; position: relative; display: flex; align-items: center; }
.moon { width: 24px; height: 24px; margin-left: 59px; }
.temp { width: 30px; margin: 0 23px 0 8px; font: 13.500px "Liberation Sans", sans-serif; color: #f2f2f2; white-space: nowrap; }
.tray-i { width: 16px; height: 16px; margin-right: 8px; fill: none; stroke: #eee; stroke-width: 1; }
.tray-kb { width: 24px; height: 16px; fill: none; stroke: #eee; stroke-width: 1; }
.eng { width: 26px; margin-left: 9px; font: 12px "Liberation Sans", sans-serif; }
.clock {
  display: flex;
  flex-direction: column;
  align-items: center;
  width: 64px;
  margin-left: 7px;
  font: 11.600px/18px "Liberation Sans", sans-serif;
}
.notif { position: relative; width: 24px; height: 24px; margin-left: 16px; }
.notif svg { width: 20px; height: 18px; }
.nbadge { right: -4px; bottom: -4px; }
```
